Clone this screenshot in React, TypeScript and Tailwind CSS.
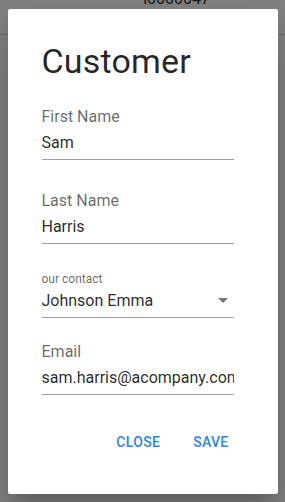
import React from 'react';

const Field: React.FC<{ label: string; value: string; small?: boolean; select?: boolean }> = ({ label, value, small, select }) => (
  <div className="flex flex-col">
    {small ? (
      <div className="text-[12px] leading-[14px] text-black/60 h-[16px] pt-[1px]">{label}</div>
    ) : (
      <div className="text-[16px] leading-[20px] text-black/60">{label}</div>
    )}
    <div className={`relative ${small ? 'mt-[4px]' : 'mt-[6px]'} pb-[6px] border-b border-[#9e9e9e]`}>
      <div className="text-[16px] leading-[20px] text-black/85 whitespace-nowrap overflow-hidden">{value}</div>
      {select && (
        <svg className="absolute right-[6px] top-[7px]" width="10" height="5" viewBox="0 0 10 5">
          <path d="M0 0h10L5 5z" fill="#757575" />
        </svg>
      )}
    </div>
  </div>
);

export default function App() {
  return (
    <div className="relative w-[285px] h-[502px] overflow-hidden bg-white" style={{ fontFamily: 'Roboto, "Liberation Sans", sans-serif' }}>
      {/* page behind the dialog */}
      <div className="h-[35px] border-b border-gray-300 flex justify-end pr-[75px]">
        <span className="-mt-[13px] text-[16px] text-black/85">l0000047</span>
      </div>
      <div className="absolute inset-0 bg-black/50 flex items-center justify-center">
        <div className="w-[270px] h-[485px] bg-white rounded-[2px] shadow-[0_11px_15px_-7px_rgba(0,0,0,0.2),0_24px_38px_3px_rgba(0,0,0,0.14)] flex flex-col">
          <div className="pl-[34px] pr-[44px] pt-[32px]">
            <h1 className="text-[34px] leading-[40px] text-black/85 tracking-[0.2px]">Customer</h1>
            <div className="mt-[26px] flex flex-col gap-[31px]">
              <Field label="First Name" value="Sam" />
              <Field label="Last Name" value="Harris" />
              <div className="-mt-[4px]">
                <Field label="our contact" value="Johnson Emma" small select />
              </div>
              <div className="-mt-[7px]">
                <Field label="Email" value="sam.harris@acompany.com" />
              </div>
            </div>
          </div>
          <div className="mt-[30px] flex justify-end gap-[17px] pr-[41px]">
            <button className="px-[8px] h-[36px] text-[14px] font-medium tracking-[0.3px] text-[#2a86e0] uppercase">Close</button>
            <button className="px-[8px] h-[36px] text-[14px] font-medium tracking-[0.3px] text-[#2a86e0] uppercase">Save</button>
          </div>
        </div>
      </div>
    </div>
  );
}
